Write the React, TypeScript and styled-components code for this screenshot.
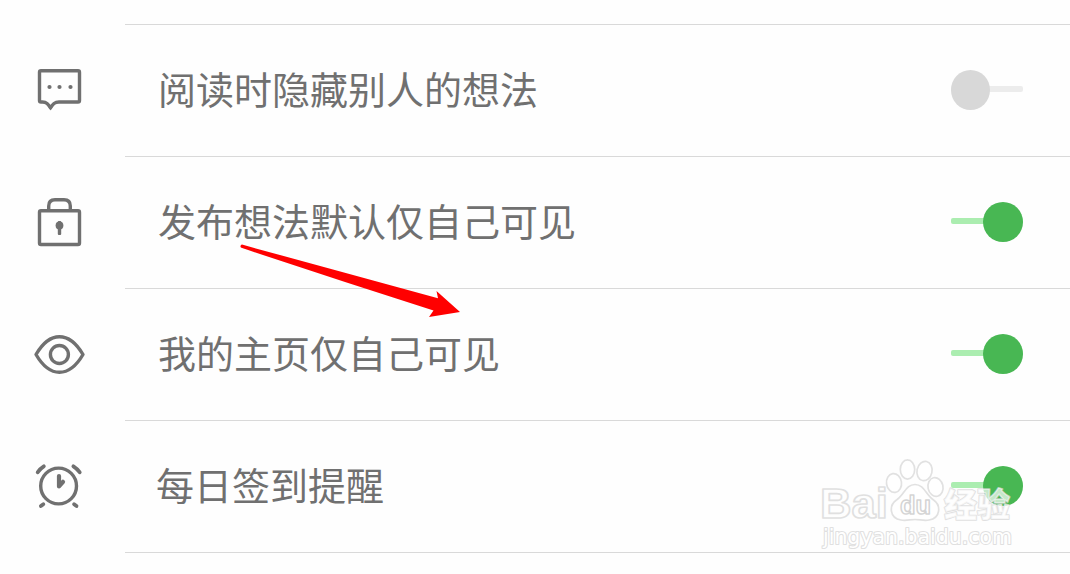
import React from "react";
import styled, { createGlobalStyle } from "styled-components";

const BubbleIcon = () => (
  <Icon viewBox="0 0 51 51">
    <path d="M7 5.7H44Q45.5 5.7 45.5 7.2V35.5Q45.5 37 44 37H25C20.5 37 19 39 16.5 42.8C14 39 12.5 37 8.5 37H7Q5.5 37 5.5 35.5V7.2Q5.5 5.7 7 5.7Z" />
    <path className="solid" d="M12.5 38.5L16.5 45.5L20.5 38.5L16.5 41Z" />
    <g className="solid">
      <circle cx="15.5" cy="22" r="2.1" />
      <circle cx="25.5" cy="22" r="2.1" />
      <circle cx="36.5" cy="22" r="2.1" />
    </g>
  </Icon>
);

const LockIcon = () => (
  <Icon viewBox="0 0 51 51">
    <rect x="5.5" y="13.8" width="40" height="33.7" rx="1.5" />
    <path d="M14.7 13V9Q14.7 2.8 21 2.8H30Q36.3 2.8 36.3 9V13" />
    <g className="solid">
      <circle cx="25.5" cy="28.4" r="3.9" />
      <rect x="23.8" y="24" width="3.4" height="14" rx="1" />
    </g>
  </Icon>
);

const EyeIcon = () => (
  <Icon viewBox="0 0 51 51">
    <path d="M2 25.5C9 13.5 16.5 7.7 25.4 7.7S42 13.5 49 25.5C42 37.5 34.3 43.3 25.4 43.3S9 37.5 2 25.5Z" />
    <circle cx="25.4" cy="25.5" r="9" />
  </Icon>
);

const AlarmIcon = () => (
  <Icon viewBox="0 0 51 51">
    <circle cx="24.6" cy="25" r="17.9" />
    <path d="M3.7 11.3Q5.8 7.8 9.8 5.3M39.4 5.3Q43.4 7.8 45.7 11.3M6.9 45L9.3 43.2M40.1 43.2L42.5 45" strokeWidth="3.8" />
    <path d="M25 15V25.5L29 20.8" strokeWidth="4.2" />
  </Icon>
);

interface Setting {
  label: string;
  icon: React.ReactNode;
  checked: boolean;
}

const settings: Setting[] = [
  { label: "阅读时隐藏别人的想法", icon: <BubbleIcon />, checked: false },
  { label: "发布想法默认仅自己可见", icon: <LockIcon />, checked: true },
  { label: "我的主页仅自己可见", icon: <EyeIcon />, checked: true },
  { label: "每日签到提醒", icon: <AlarmIcon />, checked: true },
];

const Watermark = () => (
  <WatermarkSvg viewBox="0 0 204 100" width="204" height="100">
    <g className="mark">
      <ellipse cx="78" cy="29" rx="7.5" ry="9.5" transform="rotate(-8 78 29)" />
      <ellipse cx="91.5" cy="15.5" rx="7.2" ry="9.7" />
      <ellipse cx="108.5" cy="17" rx="7.5" ry="9.7" transform="rotate(12 108.5 17)" />
      <ellipse cx="119.5" cy="33" rx="7.5" ry="9.5" transform="rotate(-12 119.5 33)" />
      <path d="M99 30.5C90 30.5 88 41 80.5 46C73 51 73 64 85 66C90 67 94 65.5 99 65.5S108 67 113 66C125 64 125 51 117.5 46C110 41 108 30.5 99 30.5Z" />
    </g>
    <text className="latin" x="4" y="64" fontSize="42" textLength="68" lengthAdjust="spacingAndGlyphs">Bai</text>
    <text className="latin du" x="84" y="60" fontSize="25" textLength="31" lengthAdjust="spacingAndGlyphs">du</text>
    <text className="han" x="128" y="63" fontSize="33" textLength="66" lengthAdjust="spacingAndGlyphs">经验</text>
    <text className="url" x="7" y="90" fontSize="20.5" textLength="189" lengthAdjust="spacingAndGlyphs">jingyan.baidu.com</text>
  </WatermarkSvg>
);

const App: React.FC = () => {
  return (
    <>
      <GlobalStyle />
      <SettingsPage>
        <SettingsList>
          {settings.map(({ label, icon, checked }) => (
            <SettingRow key={label}>
              <IconCell>{icon}</IconCell>
              <RowBody>
                <Label>{label}</Label>
                <Toggle role="switch" aria-checked={checked} aria-label={label} $checked={checked}>
                  <span className="track" />
                  <span className="knob" />
                </Toggle>
              </RowBody>
            </SettingRow>
          ))}
        </SettingsList>
        <Arrow viewBox="0 0 224 76" width="224" height="76">
          <path d="M4 2.6L200 56.3L198.5 49L222 70L191 75L195.5 68.4Q98 37.5 3.4 5.8A1.7 1.7 0 0 1 4 2.6Z" />
        </Arrow>
        <Watermark />
      </SettingsPage>
    </>
  );
};

export default App;

const GlobalStyle = createGlobalStyle`
  body {
    margin: 0;
    background: #fefefe;
  }
`;

const SettingsPage = styled.main`
  position: relative;
  width: 1070px;
  height: 574px;
  overflow: hidden;
  box-sizing: border-box;
  padding-top: 24px;
  background: #fefefe;
  font-family: "Noto Sans CJK SC", sans-serif;
`;

const SettingsList = styled.div`
  display: flex;
  flex-direction: column;
`;

const RowBody = styled.div`
  display: flex;
  flex: 1;
  align-items: center;
  justify-content: space-between;
  box-sizing: border-box;
  padding: 0 47px 0 33px;
  border-bottom: 1px solid #d9d9d9;
`;

const SettingRow = styled.div`
  display: flex;
  height: 132px;
  &:first-child {
    height: 133px;
    ${RowBody} {
      border-top: 1px solid #d9d9d9;
    }
  }
  &:last-child ${RowBody} {
    padding-left: 31px;
  }
`;

const IconCell = styled.div`
  display: flex;
  align-items: flex-end;
  width: 125px;
  box-sizing: border-box;
  padding: 0 0 41px 34px;
`;

const Icon = styled.svg`
  width: 51px;
  height: 51px;
  fill: none;
  stroke: #707070;
  stroke-width: 3.4;
  stroke-linecap: round;
  stroke-linejoin: round;
  .solid {
    fill: #707070;
    stroke: none;
  }
`;

const Label = styled.div`
  margin-bottom: 5px;
  font-size: 38px;
  font-weight: 400;
  line-height: 56px;
  white-space: nowrap;
  color: #707070;
`;

const Toggle = styled.div<{ $checked: boolean }>`
  display: grid;
  width: 72px;
  height: 40px;
  margin-bottom: 1px;
  .track,
  .knob {
    grid-area: 1 / 1;
  }
  .track {
    height: 6px;
    margin-top: 16px;
    border-radius: 2px;
    background: ${(props) => (props.$checked ? "#abedb0" : "#ececec")};
  }
  .knob {
    justify-self: ${(props) => (props.$checked ? "end" : "start")};
    width: ${(props) => (props.$checked ? "40px" : "39px")};
    height: 40px;
    border-radius: 50%;
    background: ${(props) => (props.$checked ? "#48b753" : "#d8d8d8")};
  }
`;

/* Pointer drawn over the rows */
const Arrow = styled.svg`
  position: absolute;
  left: 238px;
  top: 242px;
  fill: #ff0000;
`;

const WatermarkSvg = styled.svg`
  position: absolute;
  left: 816px;
  top: 454px;
  fill: rgba(255, 255, 255, 0.7);
  stroke: rgba(215, 215, 215, 0.75);
  stroke-width: 1.7;
  stroke-linejoin: round;
  .latin {
    font-family: "Liberation Sans", Arial, sans-serif;
    font-weight: 700;
  }
  .du {
    stroke: rgba(205, 205, 205, 0.85);
    stroke-width: 1.5;
  }
  .url {
    font-family: "DejaVu Sans", Verdana, sans-serif;
    fill: #fff;
    stroke-width: 2.2;
    paint-order: stroke;
  }
  .han {
    font-family: "Noto Sans CJK SC", sans-serif;
    font-weight: 900;
    paint-order: stroke;
  }
`;
